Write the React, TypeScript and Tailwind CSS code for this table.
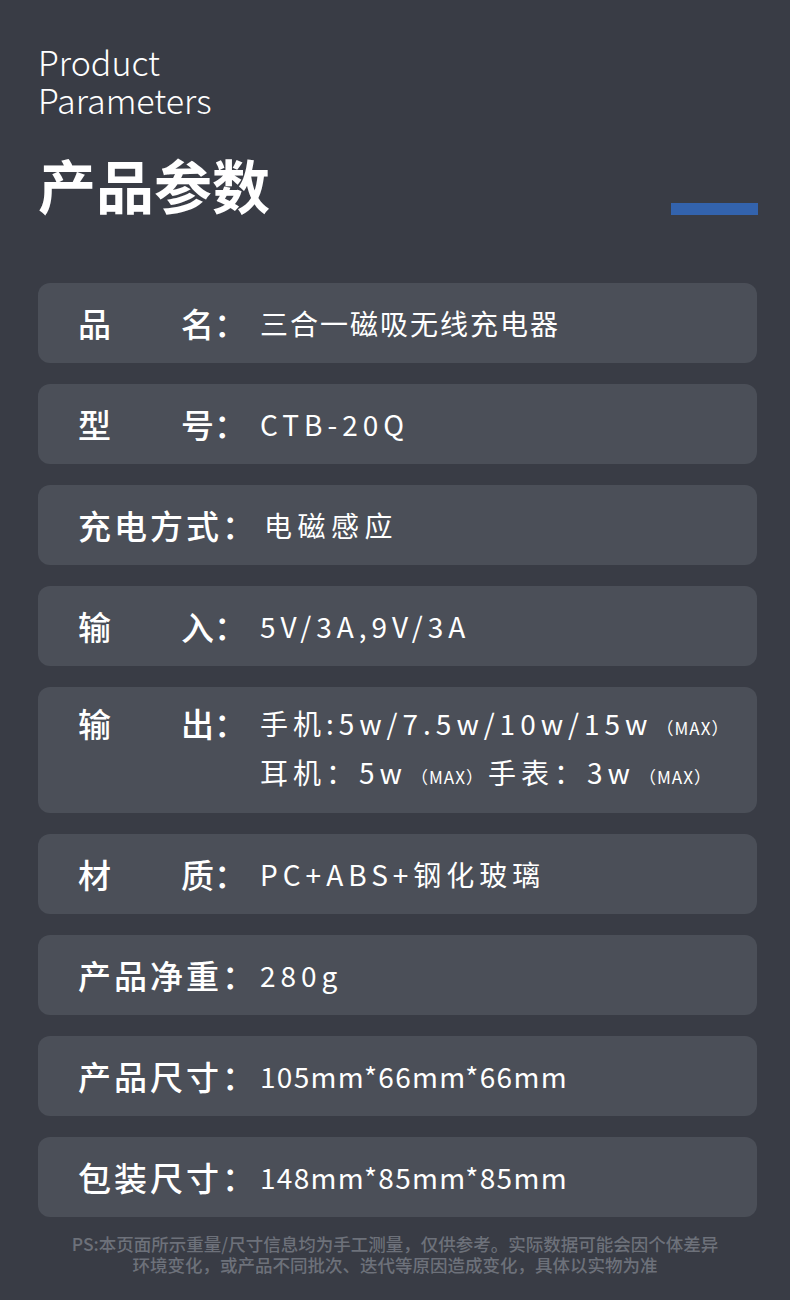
const cjk = { fontFamily: '"Noto Sans CJK SC", "Noto Sans", sans-serif' }

type Row = { label: string[]; value: React.ReactNode; track?: string }

const Max = () => <span className="text-[17px] tracking-[1px] mx-1">（MAX）</span>

const rows: Row[] = [
  { label: ["品", "名"], value: "三合一磁吸无线充电器", track: "tracking-[2px]" },
  { label: ["型", "号"], value: "CTB-20Q", track: "tracking-[5px]" },
  { label: ["充", "电", "方", "式"], value: "电磁感应", track: "tracking-[5.5px] pl-[4px]" },
  { label: ["输", "入"], value: "5V/3A,9V/3A", track: "tracking-[5px]" },
  {
    label: ["输", "出"],
    track: "tracking-[5px]",
    value: (
      <div className="flex flex-col leading-[45px]">
        <span className="whitespace-nowrap">
          手机:5w/7.5w/10w/15w<Max />
        </span>
        <span className="whitespace-nowrap">
          耳机：5w<Max />手表：3w<Max />
        </span>
      </div>
    ),
  },
  { label: ["材", "质"], value: "PC+ABS+钢化玻璃", track: "tracking-[5px]" },
  { label: ["产", "品", "净", "重"], value: "280g", track: "tracking-[5px]" },
  { label: ["产", "品", "尺", "寸"], value: "105mm*66mm*66mm", track: "tracking-[1.3px]" },
  { label: ["包", "装", "尺", "寸"], value: "148mm*85mm*85mm", track: "tracking-[1.3px]" },
]

export default function App() {
  return (
    <div className="w-[790px] h-[1300px] bg-[#393c45] text-white overflow-hidden" style={cjk}>
      <div className="px-[38px] pt-[43px]">
        <p className="text-[34px] font-light leading-[38px]">
          Product
          <br />
          Parameters
        </p>
        <div className="flex items-end justify-between mt-[32px]">
          <h1 className="text-[58px] font-bold leading-[66px]">产品参数</h1>
          <div className="w-[87px] h-[12px] bg-[#3363ad] mb-[2px] mr-[-6px]" />
        </div>
      </div>

      <div className="mt-[66px] px-[38px] flex flex-col gap-[21px]">
        {rows.map((row, i) => (
          <div
            key={i}
            className={`bg-[#4b4f58] rounded-[12px] w-[719px] flex pl-[40px] ${
              row.label[1] === "出" ? "py-[14px] items-start" : "h-[80px] items-center"
            }`}
          >
            <div className="w-[182px] shrink-0 flex items-center text-[33px] font-medium leading-[45px]">
              {row.label.length === 2 ? (
                <span className="w-[136px] flex justify-between">
                  {row.label.map((c, j) => (
                    <span key={j}>{c}</span>
                  ))}
                </span>
              ) : (
                <span className="tracking-[3px]">{row.label.join("")}</span>
              )}
              <span>：</span>
            </div>
            <div className={`text-[28px] leading-[45px] ${row.track ?? ""}`}>{row.value}</div>
          </div>
        ))}
      </div>

      <div className="mt-[16px] text-center text-[17.5px] font-medium leading-[21px] text-[#6d717a]">
        <p>PS:本页面所示重量/尺寸信息均为手工测量，仅供参考。实际数据可能会因个体差异</p>
        <p>环境变化，或产品不同批次、迭代等原因造成变化，具体以实物为准</p>
      </div>
    </div>
  )
}
